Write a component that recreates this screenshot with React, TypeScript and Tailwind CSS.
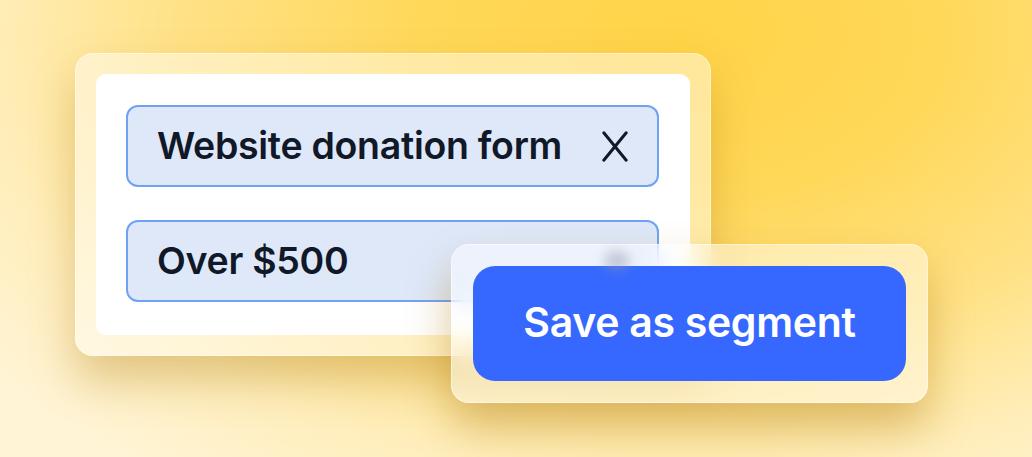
import React from "react";

const XIcon = () => (
  <svg width="26" height="31" viewBox="0 0 26 31" fill="none">
    <path d="M1.8 1.8 L24.2 29.2 M24.2 1.8 L1.8 29.2" stroke="#111827" strokeWidth="3" strokeLinecap="round" />
  </svg>
);

const Chip = ({ label, closable }: { label: string; closable?: boolean }) => (
  <div className="flex h-[82px] w-[533px] items-center justify-between rounded-[12px] border-2 border-[#70A2F4] bg-[#DEE8F9] pl-[29px] pr-[29px]">
    <span className="text-[37.5px] font-semibold tracking-[-0.3px] text-[#111827]">{label}</span>
    {closable && <XIcon />}
  </div>
);

export default function App() {
  return (
    <div
      className="relative h-[457px] w-[1032px] overflow-hidden bg-[radial-gradient(ellipse_85%_120%_at_66%_8%,#FFD447_0%,#FFD85A_30%,#FFE288_58%,#FFEEBB_80%,#FFF4D6_100%)]"
      style={{ fontFamily: "Inter, 'Noto Sans', sans-serif" }}
    >
      <div className="pl-[75px] pt-[53px]">
        {/* main card */}
        <div className="w-[636px] rounded-[18px] border border-white/40 bg-white/45 p-[20px] shadow-[0_24px_44px_rgba(170,115,0,0.34)] backdrop-blur-md">
          <div className="flex h-[261px] flex-col gap-[33px] rounded-[10px] bg-white px-[30px] pt-[31px]">
            <Chip label="Website donation form" closable />
            <Chip label="Over $500" />
          </div>
        </div>
      </div>

      {/* floating action */}
      <div className="absolute left-[451px] top-[244px] h-[159px] w-[477px] rounded-[18px] border border-white/50 bg-white/45 p-[21px] shadow-[0_24px_44px_rgba(170,115,0,0.4)] backdrop-blur-md">
        <div className="absolute left-[152px] top-[6px] h-[20px] w-[26px] rounded-full bg-[#8E95A8]/45 blur-[6px]" />
        <button className="flex h-[115px] w-[433px] items-center justify-center rounded-[22px] bg-[#3668FF] pb-[2px] text-[41px] font-semibold tracking-[-0.3px] text-white">
          Save as segment
        </button>
      </div>
    </div>
  );
}
